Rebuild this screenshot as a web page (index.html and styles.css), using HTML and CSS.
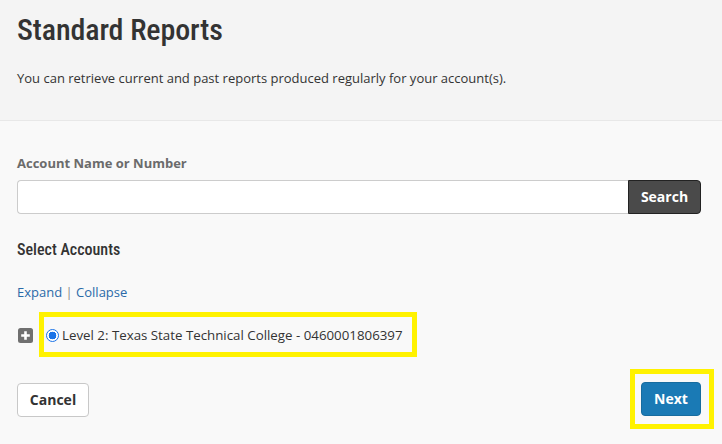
FILE: index.html
```html
<!DOCTYPE html>
<html lang="en">
<head>
<meta charset="utf-8">
<title>Standard Reports</title>
<link rel="stylesheet" href="styles.css">
</head>
<body>
<header class="page-header">
  <h1 class="page-title">Standard Reports</h1>
  <p class="page-intro">You can retrieve current and past reports produced regularly for your account(s).</p>
</header>
<main class="content">
  <label class="field-label" for="acct">Account Name or Number</label>
  <div class="search-group">
    <input id="acct" class="search-input" type="text">
    <button class="btn btn-dark" type="button">Search</button>
  </div>
  <h2 class="section-title">Select Accounts</h2>
  <div class="tree-links"><a href="#">Expand</a> <span class="sep">|</span> <a href="#">Collapse</a></div>
  <div class="tree-row">
    <span class="tree-toggle">
      <svg width="15" height="15" viewBox="0 0 15 15"><rect x="0" y="0" width="15" height="15" rx="2.5" fill="#707070"/><path d="M7.5 3.2v8.6M3.2 7.5h8.6" stroke="#fff" stroke-width="2.6"/></svg>
    </span>
    <label class="highlight node">
      <input class="radio" type="radio" name="acct" checked>
      <span class="node-text">Level 2: Texas State Technical College - 0460001806397</span>
    </label>
  </div>
  <div class="actions">
    <button class="btn btn-light" type="button">Cancel</button>
    <div class="highlight next-wrap">
      <button class="btn btn-primary" type="button">Next</button>
    </div>
  </div>
</main>
</body>
</html>
```
FILE: styles.css
```css
html, body {
  margin: 0;
  padding: 0;
}
body {
  background: #f9f9f9;
  font-family: "Open Sans", "Liberation Sans", sans-serif;
  font-size: 13px;
  line-height: 18px;
  color: #333;
}
.page-header {
  background: #f4f4f4;
  border-bottom: 1px solid #e8e8e8;
  padding: 14px 17px 33px;
}
.page-title {
  margin: 0;
  font-family: Roboto, "Liberation Sans", sans-serif;
  font-stretch: condensed;
  font-weight: 500;
  font-size: 30px;
  line-height: 32px;
  letter-spacing: -0.1px;
  color: #333;
}
.page-intro {
  margin: 23px 0 0;
  color: #333;
}
.content {
  padding: 32px 21px 0 17px;
}
.field-label {
  display: block;
  font-weight: 700;
  color: #6b6b6b;
  padding-top: 1px;
}
.search-group {
  display: flex;
  margin-top: 8px;
}
.search-input {
  flex: 1;
  height: 34px;
  box-sizing: border-box;
  margin: 0;
  border: 1px solid #ccc;
  border-right: none;
  border-radius: 4px 0 0 4px;
  background: #fff;
  font: inherit;
  padding: 0 10px;
}
.btn {
  height: 34px;
  box-sizing: border-box;
  font-family: "Open Sans", "Liberation Sans", sans-serif;
  font-weight: 700;
  font-size: 14px;
  border-radius: 4px;
  cursor: pointer;
  margin: 0;
  padding: 0 0 1px;
}
.btn-dark {
  width: 73px;
  background: #4a4a4a;
  border: 1px solid #222;
  color: #fff;
  border-radius: 0 4px 4px 0;
}
.section-title {
  margin: 26px 0 0;
  font-family: Roboto, "Liberation Sans", sans-serif;
  font-stretch: condensed;
  font-weight: 500;
  font-size: 16px;
  line-height: 20px;
  color: #333;
}
.tree-links {
  margin-top: 23px;
  color: #999;
}
.tree-links a {
  color: #2a6aa8;
  text-decoration: none;
}
.tree-links .sep {
  color: #888;
}
.tree-row {
  display: flex;
  align-items: center;
  gap: 6px;
  margin-top: 11px;
}
.tree-toggle {
  display: flex;
  margin-left: 1px;
  margin-top: 1px;
}
.highlight {
  border: 5px solid #fff200;
}
.node {
  display: flex;
  align-items: center;
  gap: 3px;
  padding: 9px 9px 8px 2px;
  color: #333;
}
.node-text {
  font-size: 13.3px;
}
.radio {
  appearance: none;
  -webkit-appearance: none;
  width: 13px;
  height: 13px;
  margin: 0;
  border-radius: 50%;
  border: 1.5px solid #1a73e8;
  box-sizing: border-box;
  background: radial-gradient(circle, #1a73e8 0 3.6px, #fff 4.1px);
}
.actions {
  display: flex;
  justify-content: space-between;
  align-items: flex-start;
  margin-top: 26px;
}
.btn-light {
  width: 72px;
  background: #fff;
  border: 1px solid #c8c8c8;
  color: #333;
}
.next-wrap {
  padding: 8px 8px 8px 6px;
  margin: -14px -13px 0 0;
}
.btn-primary {
  width: 60px;
  display: block;
  background: #1a7ab5;
  border: 1px solid #176c9f;
  color: #fff;
}
```
